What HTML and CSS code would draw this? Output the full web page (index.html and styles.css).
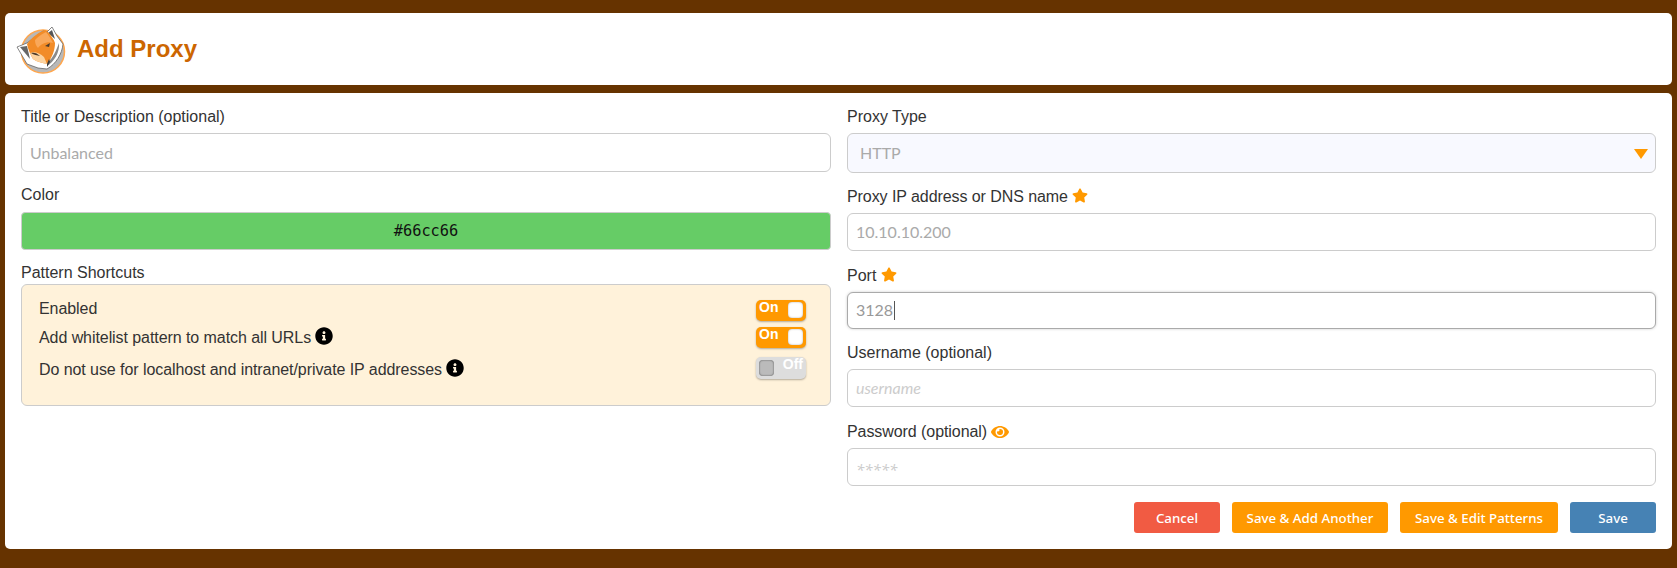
FILE: index.html
```html
<!DOCTYPE html>
<html lang="en">
<head>
<meta charset="utf-8">
<title>Add Proxy</title>
<link rel="stylesheet" href="styles.css">
</head>
<body>
<svg width="0" height="0" class="defs">
  <symbol id="star" viewBox="0 0 576 512"><path d="M259.3 17.8 194 150.2 47.9 171.5c-26.2 3.8-36.7 36.1-17.7 54.6l105.7 103-25 145.500c-4.500 26.300 23.200 46 46.400 33.700L288 439.600l130.700 68.700c23.200 12.200 50.900-7.400 46.400-33.700l-25-145.500 105.700-103c19-18.500 8.500-50.800-17.700-54.600L382 150.200 316.700 17.800c-11.700-23.600-45.600-23.900-57.400 0z"/></symbol>
  <symbol id="info" viewBox="0 0 512 512"><path d="M256 8C119 8 8 119 8 256s111 248 248 248 248-111 248-248S393 8 256 8zm0 110c23.200 0 42 18.800 42 42s-18.800 42-42 42-42-18.800-42-42 18.800-42 42-42zm56 254c0 6.600-5.400 12-12 12h-88c-6.600 0-12-5.400-12-12v-24c0-6.600 5.400-12 12-12h12v-64h-12c-6.600 0-12-5.400-12-12v-24c0-6.600 5.400-12 12-12h64c6.600 0 12 5.400 12 12v100h12c6.600 0 12 5.400 12 12v24z"/></symbol>
</svg>
<header class="panel head">
  <svg class="logo" viewBox="0 0 50 48" width="50" height="48" aria-hidden="true">
    <circle cx="27" cy="25.500" r="21.500" fill="#b8b8b8" stroke="#ffa64d" stroke-width="1.500"/>
    <path d="M36 1 41 10 47 18C46 28 40 38 31 43L22 42 11 38 1 21 11 17 27 5 31 6Z" fill="#fff" stroke="#555" stroke-width=".7" stroke-linejoin="round"/>
    <path d="M43 17C44 26 38 36 31 40L32 36C37 32 40 25 43 17Z" fill="#8a8a8a"/>
    <path d="M32 7 36 4 39 13Z" fill="#555"/>
    <path d="M4 21 11 20 14 33Z" fill="#666"/>
    <path d="M11 18C16 11 23 6 29 4L33 7C35 10 38 13 39 17 39 24 36 32 31 38 27 37 21 36 17 33 14 28 12 23 11 18Z" fill="#f28c28"/>
    <path d="M19 14C24 9 28 7 30 6 33 10 35 13 37 17 31 15 25 18 22 22 20 20 19 17 19 14Z" fill="#f9a85a"/>
    <path d="M14 27C18 25 24 27 28 31L31 38C27 37 21 36 17 33Z" fill="#fbd3a0"/>
    <path d="M15 27C18 26 21 27 24 30 21 29 18 29 15 27ZM29 20 34 17 33 21Z" fill="#4b3a2a"/>
    <path d="M31 38 33 33 34 36 31 41Z" fill="#3a3a3a"/>
  </svg>
  <h1 class="title">Add Proxy</h1>
</header>
<main class="panel form">
  <section class="col col-left">
    <div class="field">
      <label class="lbl">Title or Description (optional)</label>
      <div class="input">Unbalanced</div>
    </div>
    <div class="field">
      <label class="lbl">Color</label>
      <div class="color">#66cc66</div>
    </div>
    <div class="field">
      <label class="lbl lbl-tight">Pattern Shortcuts</label>
      <div class="shortcuts">
        <div class="row">
          <span>Enabled</span>
          <span class="toggle on"><span class="tg-text">On</span><span class="knob"></span></span>
        </div>
        <div class="row">
          <span>Add whitelist pattern to match all URLs <svg class="ic-info"><use href="#info"/></svg></span>
          <span class="toggle on"><span class="tg-text">On</span><span class="knob"></span></span>
        </div>
        <div class="row">
          <span>Do not use for localhost and intranet/private IP addresses <svg class="ic-info"><use href="#info"/></svg></span>
          <span class="toggle off"><span class="knob"></span><span class="tg-text">Off</span></span>
        </div>
      </div>
    </div>
  </section>
  <section class="col col-right">
    <div class="field">
      <label class="lbl">Proxy Type</label>
      <div class="input select">HTTP<span class="caret"></span></div>
    </div>
    <div class="field">
      <label class="lbl narrow">Proxy IP address or DNS name <svg class="ic-star"><use href="#star"/></svg></label>
      <div class="input val">10.10.10.200</div>
    </div>
    <div class="field">
      <label class="lbl">Port <svg class="ic-star"><use href="#star"/></svg></label>
      <div class="input val focus">3128<span class="cursor"></span></div>
    </div>
    <div class="field">
      <label class="lbl">Username (optional)</label>
      <div class="input val hint">username</div>
    </div>
    <div class="field">
      <label class="lbl narrow">Password (optional) <svg class="ic-eye" viewBox="0 0 576 512"><path d="M572.500 241.400C518.300 135.600 410.900 64 288 64S57.700 135.600 3.500 241.400a32.400 32.400 0 0 0 0 29.200C57.700 376.400 165.100 448 288 448s230.300-71.600 284.500-177.400a32.400 32.400 0 0 0 0-29.200zM288 400a144 144 0 1 1 144-144 143.900 143.900 0 0 1-144 144zm0-240a95.300 95.300 0 0 0-25.300 3.800 47.900 47.900 0 0 1-66.900 66.900A95.800 95.800 0 1 0 288 160z"/></svg></label>
      <div class="input val hint stars">*****</div>
    </div>
    <div class="actions">
      <button class="btn red">Cancel</button>
      <button class="btn orange">Save &amp; Add Another</button>
      <button class="btn orange">Save &amp; Edit Patterns</button>
      <button class="btn blue">Save</button>
    </div>
  </section>
</main>
</body>
</html>
```
FILE: styles.css
```css
* { box-sizing: border-box; }
html, body { height: 100%; }
body {
  margin: 0;
  padding: 13px 5px 0;
  background: #663300;
  font-family: "Liberation Sans", Arial, sans-serif;
  font-size: 16px;
  color: #333;
  overflow: hidden;
}
.defs { position: absolute; }
.panel { background: #fff; border-radius: 5px; }
.head {
  display: flex;
  align-items: center;
  height: 72px;
  padding-left: 11px;
  margin-bottom: 8px;
}
.logo { flex: none; margin-top: 1px; }
.title {
  margin: 0 0 0 11px;
  font-size: 24px;
  line-height: 30px;
  font-weight: bold;
  color: #cc6600;
}
.form {
  display: grid;
  grid-template-columns: 810px 809px;
  column-gap: 16px;
  height: 456px;
  padding: 9px 16px 0;
}
.field { margin-bottom: 9px; }
.lbl {
  display: block;
  height: 22px;
  line-height: 30px;
  margin-bottom: 9px;
  white-space: nowrap;
}
.narrow { letter-spacing: -.07px; }
.lbl-tight { margin-bottom: 1px; line-height: 28px; }
.input {
  position: relative;
  height: 38px;
  padding-left: 8px;
  border: 1px solid #ccc;
  border-radius: 6px;
  background: #fff;
  font-family: Lato, "Noto Sans", sans-serif;
  font-size: 16px;
  line-height: 36px;
  color: #aaa;
}
.col-left .field:first-child .input { height: 39px; line-height: 37px; }
.col-left .field:nth-child(2) .lbl { line-height: 28px; }
.col-right .field:first-child .input { height: 40px; line-height: 37px; }
.col-right .field:nth-child(2) { margin-bottom: 10px; }
.col-right .field:nth-child(3) .input { height: 37px; line-height: 34px; }
.col-right .field:nth-child(4) { margin-bottom: 10px; }
.select { background: #f8f9ff; padding-left: 12px; }
.caret {
  position: absolute;
  right: 7px;
  top: 15px;
  border-left: 7px solid transparent;
  border-right: 7px solid transparent;
  border-top: 10px solid #f90;
}
.focus { border-color: #aaa; box-shadow: 0 0 3px rgba(0,0,0,.2); color: #999; }
.cursor {
  display: inline-block;
  width: 1px;
  height: 19px;
  margin-left: 1px;
  vertical-align: -4px;
  background: #555;
}
.hint { font-style: italic; color: #ccc; }
.col-right .stars { font-family: "Noto Sans", sans-serif; font-size: 15px; line-height: 40px; }
.color {
  height: 38px;
  border: 1px solid #ccc;
  border-radius: 4px;
  background: #66cc66;
  text-align: center;
  font-family: "DejaVu Sans Mono", monospace;
  font-size: 15.300px;
  line-height: 36px;
  color: #111;
}
.shortcuts {
  height: 122px;
  margin-top: 3px;
  padding: 12px 24px 0 17px;
  border: 1px solid #ccc;
  border-radius: 6px;
  background: #fff2da;
}
.row {
  display: flex;
  justify-content: space-between;
  align-items: flex-start;
  height: 29px;
  line-height: 24px;
  letter-spacing: -.07px;
}
.row:nth-child(2) { height: 32px; }
.row:nth-child(1) .toggle { margin-top: 3px; }
.row:nth-child(2) .toggle { margin-top: 1px; }
.row:nth-child(3) .toggle { margin-top: -1px; }
.ic-info { width: 18px; height: 18px; vertical-align: -2px; fill: #000; }
.ic-star { width: 16px; height: 15px; vertical-align: -1px; fill: #f90; }
.ic-eye { width: 18px; height: 16px; vertical-align: -3px; fill: #f90; }
.toggle {
  display: flex;
  align-items: flex-start;
  justify-content: space-between;
  width: 50px;
  height: 21px;
  padding: 0 3px;
  border-radius: 5px;
  box-shadow: 0 1px 2px rgba(0,0,0,.3);
  font-weight: bold;
  font-size: 14px;
  line-height: 14px;
  letter-spacing: 0;
  color: #fff;
}
.on { background: #f90; }
.off { background: #ddd; height: 22px; }
.knob {
  width: 15px;
  height: 16px;
  margin-top: 2px;
  border-radius: 4px;
  background: #fff;
  box-shadow: inset 0 0 2px rgba(0,0,0,.35);
}
.off .knob { background: #bbb; margin-top: 3px; box-shadow: inset 0 0 2px rgba(0,0,0,.6); }
.tg-text { display: block; }
.actions {
  display: flex;
  justify-content: flex-end;
  gap: 12px;
  margin-top: 16px;
}
.btn {
  height: 31px;
  padding: 0;
  border: 0;
  border-radius: 3px;
  font-family: "Noto Sans", "Open Sans", sans-serif;
  font-size: 13.300px;
  font-weight: 500;
  color: #fff;
}
.red { background: #f15b43; width: 86px; }
.orange { background: #f90; width: 156px; }
.orange + .orange { width: 158px; }
.blue { background: #4682b4; width: 86px; }
```
